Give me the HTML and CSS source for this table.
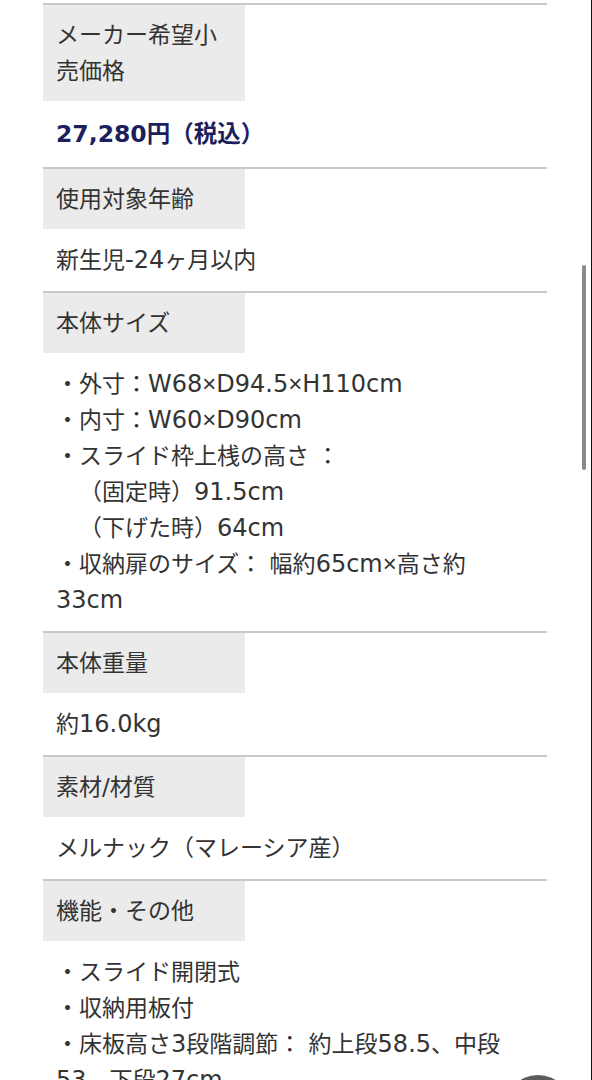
FILE: index.html
```html
<!DOCTYPE html>
<html lang="ja">
<head>
<meta charset="utf-8">
<title>商品仕様</title>
<link rel="stylesheet" href="styles.css">
</head>
<body>
<div class="spec">
  <div class="row">
    <div class="label">メーカー希望小売価格</div>
    <div class="value price">27,280円（税込）</div>
  </div>
  <div class="row">
    <div class="label">使用対象年齢</div>
    <div class="value">新生児<span class="lt">-24</span>ヶ月以内</div>
  </div>
  <div class="row">
    <div class="label">本体サイズ</div>
    <div class="value">・外寸：<span class="lt">W68<span class="times">×</span>D94.5<span class="times">×</span>H110cm</span><br>・内寸：<span class="lt">W60<span class="times">×</span>D90cm</span><br>・スライド枠上桟の高さ ：<br>　（固定時）<span class="lt">91.5cm</span><br>　（下げた時）<span class="lt">64cm</span><br>・収納扉のサイズ： 幅約<span class="lt">65cm<span class="times">×</span></span>高さ約<br><span class="lt">33cm</span></div>
  </div>
  <div class="row">
    <div class="label">本体重量</div>
    <div class="value">約<span class="lt">16.0kg</span></div>
  </div>
  <div class="row">
    <div class="label">素材/材質</div>
    <div class="value">メルナック（マレーシア産）</div>
  </div>
  <div class="row">
    <div class="label">機能・その他</div>
    <div class="value">・スライド開閉式<br>・収納用板付<br>・床板高さ<span class="lt">3</span>段階調節： 約上段<span class="lt">58.5</span>、中段<br><span class="lt">53</span>、下段<span class="lt">27cm</span></div>
  </div>
</div>
<div class="scroll-indicator"></div>
<div class="float-button"></div>
<div class="edge"></div>
</body>
</html>
```

FILE: styles.css
```css
html, body {
  margin: 0;
  padding: 0;
  background: #ffffff;
  overflow: hidden;
}

body {
  font-family: "DejaVu Sans", "Noto Sans CJK JP", sans-serif;
  font-size: 23px;
  line-height: 36px;
  color: #333333;
  text-spacing-trim: space-all;
}

.spec {
  margin: 3px 0 0 43px;
  width: 504px;
}

.row {
  border-top: 2px solid #c9c9c9;
}

.label {
  width: 202px;
  box-sizing: border-box;
  padding: 12px 13px;
  background: #ebebeb;
}

.value {
  padding: 13px;
}

.lt {
  font-size: 24px;
}

.times {
  font-family: "Liberation Sans", sans-serif;
}

.price {
  padding: 14px 13px;
  font-size: 23.5px;
  line-height: 38px;
  font-weight: 700;
  color: #1c1f5c;
}

.scroll-indicator {
  position: fixed;
  left: 582px;
  top: 265px;
  width: 4px;
  height: 205px;
  border-radius: 2px;
  background: #8a8a8a;
}

.float-button {
  position: fixed;
  left: 503px;
  top: 1075px;
  width: 70px;
  height: 70px;
  border-radius: 50%;
  background: #5c5c5c;
}

.edge {
  position: fixed;
  right: 0;
  top: 0;
  width: 1px;
  height: 100%;
  background: #111111;
}
```
